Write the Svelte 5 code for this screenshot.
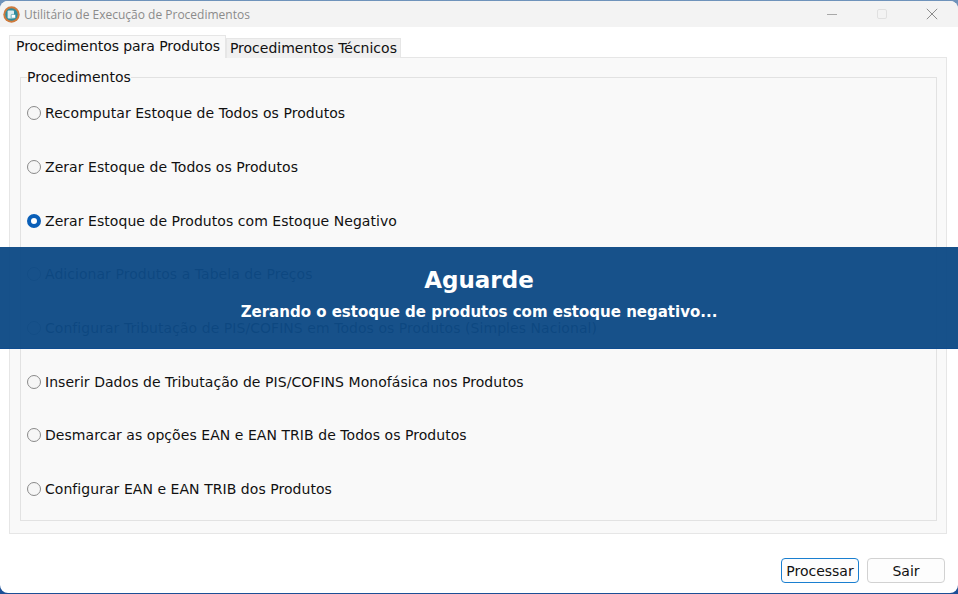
<script>
  const procedures = [
    'Recomputar Estoque de Todos os Produtos',
    'Zerar Estoque de Todos os Produtos',
    'Zerar Estoque de Produtos com Estoque Negativo',
    'Adicionar Produtos a Tabela de Preços',
    'Configurar Tributação de PIS/COFINS em Todos os Produtos (Simples Nacional)',
    'Inserir Dados de Tributação de PIS/COFINS Monofásica nos Produtos',
    'Desmarcar as opções EAN e EAN TRIB de Todos os Produtos',
    'Configurar EAN e EAN TRIB dos Produtos'
  ]
  let selected = 2
</script>

<div class="desktop">
  <div class="window">
    <header class="titlebar">
      <svg class="app-icon" width="17" height="17" viewBox="0 0 17 17" aria-hidden="true">
        <circle cx="8.5" cy="8.5" r="8.2" fill="#cf7a3c" />
        <circle cx="8.5" cy="8.5" r="6.2" fill="#2f8b9c" />
        <rect x="4.6" y="4.4" width="6.4" height="8" rx="1" fill="#dcedf0" />
        <rect x="8.2" y="8.4" width="4.4" height="3.8" rx="0.6" fill="#ffffff" stroke="#2f8b9c" stroke-width="0.6" />
      </svg>
      <span class="title">Utilitário de Execução de Procedimentos</span>
      <div class="controls">
        <svg width="12" height="12" viewBox="0 0 12 12" aria-hidden="true"><path d="M1 6.5h10" stroke="#a8a8a8" stroke-width="1.2" /></svg>
        <svg width="12" height="12" viewBox="0 0 12 12" aria-hidden="true"><rect x="1.5" y="1.5" width="9" height="9" rx="1.5" fill="none" stroke="#e0e0e0" /></svg>
        <svg width="12" height="12" viewBox="0 0 12 12" aria-hidden="true"><path d="M.8.8l10.4 10.4M11.2.8L.8 11.2" stroke="#8c8c8c" stroke-width="1" /></svg>
      </div>
    </header>

    <div class="body">
      <div class="tabs">
        <div class="tab active">Procedimentos para Produtos</div>
        <div class="tab">Procedimentos Técnicos</div>
      </div>
      <div class="panel">
        <fieldset class="group">
          <legend>Procedimentos</legend>
          {#each procedures as label, i}
            <label class="option">
              <input type="radio" name="proc" value={i} bind:group={selected} />
              <span class="dot"></span>
              <span>{label}</span>
            </label>
          {/each}
        </fieldset>
      </div>
      <div class="actions">
        <button class="btn primary">Processar</button>
        <button class="btn">Sair</button>
      </div>
    </div>

    <div class="overlay">
      <strong class="overlay-title">Aguarde</strong>
      <span class="overlay-text">Zerando o estoque de produtos com estoque negativo...</span>
    </div>
  </div>
</div>

<style>
  :global(body) {
    margin: 0;
  }
  .desktop {
    width: 958px;
    height: 594px;
    overflow: hidden;
    background: linear-gradient(180deg, #6f93bb 0%, #1c4f96 100%);
    font-family: "DejaVu Sans", Verdana, sans-serif;
    font-size: 14px;
    color: #111;
  }
  .window {
    position: relative;
    height: 592px;
    margin-top: 1px;
    display: flex;
    flex-direction: column;
    background: #fff;
    border-radius: 8px;
    overflow: hidden;
  }
  .titlebar {
    flex: none;
    height: 26px;
    display: flex;
    align-items: center;
    background: #f3f3f3;
    padding-left: 3px;
  }
  .app-icon {
    margin-right: 4px;
  }
  .title {
    font-family: "Open Sans", "Noto Sans", sans-serif;
    font-size: 12px;
    color: #8b8b8b;
  }
  .controls {
    margin-left: auto;
    display: flex;
    align-items: center;
    gap: 38px;
    padding-right: 20px;
  }
  .body {
    flex: 1;
    display: flex;
    flex-direction: column;
    padding: 9px 11px 10px 9px;
  }
  .tabs {
    flex: none;
    height: 22px;
    display: flex;
    align-items: flex-end;
    position: relative;
    z-index: 1;
    margin-bottom: -1px;
  }
  .tab {
    height: 19px;
    line-height: 19px;
    padding: 0 3px;
    background: #f0f0f0;
    border: 1px solid #e6e6e6;
    border-bottom: none;
    white-space: nowrap;
  }
  .tab.active {
    height: 22px;
    line-height: 20px;
    padding: 0 5px 0 6px;
    background: #f9f9f9;
    letter-spacing: -0.07px;
  }
  .panel {
    height: 477px;
    box-sizing: border-box;
    background: #f9f9f9;
    border: 1px solid #e6e6e6;
    padding: 10px 9px 12px 10px;
  }
  .group {
    margin: 0;
    height: 100%;
    box-sizing: border-box;
    border: 1px solid #e2e2e2;
    padding: 0.4px 6px 0;
    display: flex;
    flex-direction: column;
    min-width: 0;
  }
  legend {
    padding: 0;
    line-height: 18px;
  }
  .option {
    flex: none;
    height: 53.7px;
    display: flex;
    align-items: center;
    gap: 4px;
    letter-spacing: 0.05px;
  }
  .option input {
    position: absolute;
    opacity: 0;
    width: 0;
    height: 0;
    margin: 0;
  }
  .dot {
    flex: none;
    width: 14px;
    height: 14px;
    box-sizing: border-box;
    border: 1px solid #8a8a8a;
    border-radius: 50%;
    background: #f6f6f6;
  }
  .option input:checked + .dot {
    border: 4px solid #0a5fb8;
    background: #fff;
  }
  .actions {
    margin-top: auto;
    display: flex;
    justify-content: flex-end;
    gap: 8px;
    padding-right: 2px;
  }
  .btn {
    width: 78px;
    height: 25px;
    padding: 0;
    box-sizing: border-box;
    font: inherit;
    color: #111;
    background: #fdfdfd;
    border: 1px solid #d2d2d2;
    border-radius: 4px;
  }
  .btn.primary {
    border: 1px solid #1a7fd0;
  }
  .overlay {
    position: absolute;
    left: 0;
    right: 0;
    top: 246px;
    height: 102px;
    box-sizing: border-box;
    display: flex;
    flex-direction: column;
    align-items: center;
    background: rgba(14, 74, 133, 0.96);
    border-bottom: 1px solid #0f4c8f;
    color: #fff;
    font-weight: bold;
  }
  .overlay-title {
    margin-top: 19px;
    font-size: 23px;
    line-height: 28px;
  }
  .overlay-text {
    margin-top: 8px;
    font-size: 15px;
    line-height: 20px;
  }
</style>
